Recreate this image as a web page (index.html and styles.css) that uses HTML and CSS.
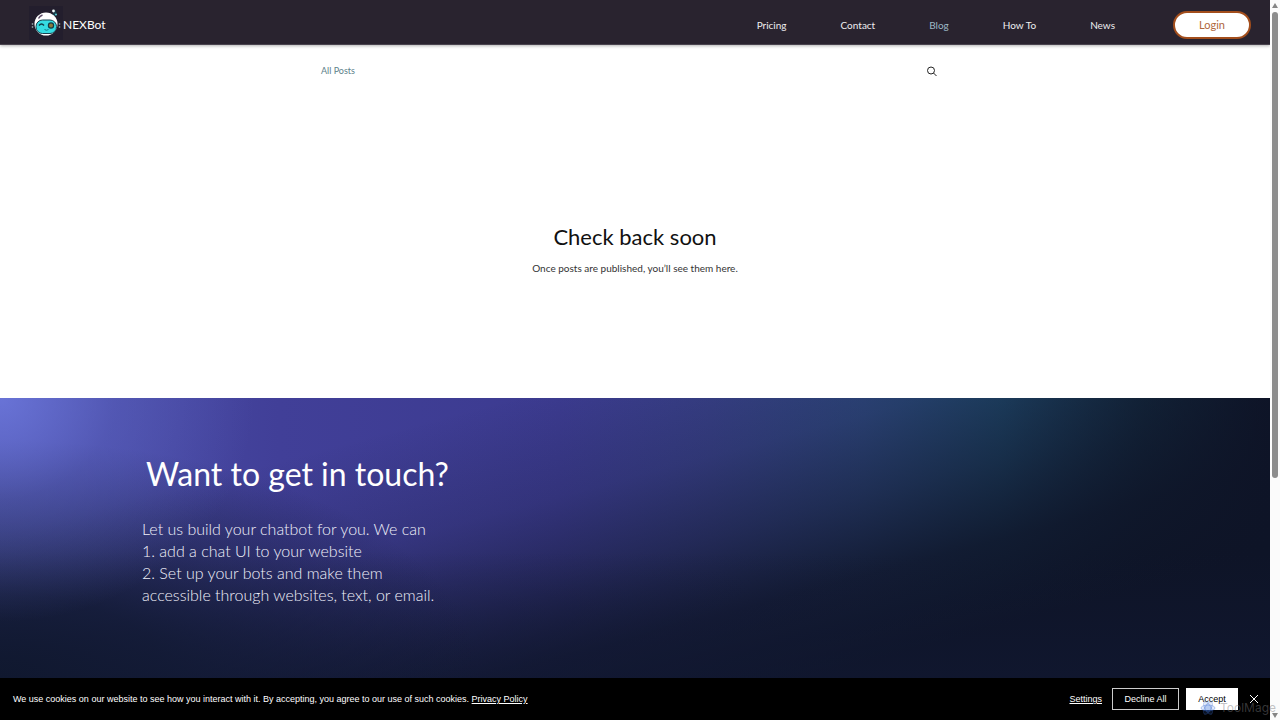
FILE: index.html
```html
<!DOCTYPE html>
<html lang="en">
<head>
<meta charset="utf-8">
<meta name="viewport" content="width=device-width, initial-scale=1">
<title>Blog | NEXBot</title>
<link rel="stylesheet" href="styles.css">
</head>
<body>
<div class="page">
  <header class="header">
    <a class="brand" href="#">
      <svg class="brand-logo" viewBox="0 0 34 34" aria-hidden="true">
        <rect width="34" height="34" fill="#231e2d"/>
        <path d="M23.500 10c2.500-1 3-3 2-5" fill="none" stroke="#173f4c" stroke-width="3"/>
        <circle cx="24.500" cy="5" r="1.400" fill="#f4ffff"/>
        <circle cx="27" cy="8.500" r="1" fill="#5fd4dc"/>
        <circle cx="24" cy="10.500" r="1" fill="#d9f4f8"/>
        <ellipse cx="17" cy="18" rx="11.500" ry="11.500" fill="#fff"/>
        <path d="M9.500 12.500c1-2 2.500-3 4-3.500" fill="none" stroke="#5b4a66" stroke-width="1.500"/>
        <rect x="7" y="14" width="20.500" height="13.500" rx="6.500" fill="#35dce2" stroke="#17414f" stroke-width="1"/>
        <path d="M10 19.500q2.500-3 5 0" fill="none" stroke="#123c48" stroke-width="1.500"/>
        <circle cx="22" cy="19.500" r="2.600" fill="#8a7a3d" stroke="#123c48" stroke-width="1.200"/>
        <path d="M15.500 23.500q2 1.500 4 0" fill="none" stroke="#167886" stroke-width="1"/>
        <path d="M3.500 17.500v1M3.500 20.500v1M30.500 17.500v1M30.500 20.500v1" stroke="#d4f2f4" stroke-width="1.400"/>
      </svg>
      <span class="brand-name">NEXBot</span>
    </a>
    <nav class="nav" aria-label="Main">
      <a href="#">Pricing</a>
      <a href="#">Contact</a>
      <a class="current" href="#" aria-current="page">Blog</a>
      <a href="#">How To</a>
      <a href="#">News</a>
    </nav>
    <button class="login" type="button">Login</button>
  </header>

  <main class="blog">
    <div class="blog-bar">
      <a class="all-posts" href="#">All Posts</a>
      <button class="search" type="button" aria-label="Search">
        <svg viewBox="0 0 12 12" aria-hidden="true"><circle cx="5" cy="5.500" r="3.500"/><path d="M7.500 8l3 3"/></svg>
      </button>
    </div>
    <div class="empty">
      <h1>Check back soon</h1>
      <p>Once posts are published, you’ll see them here.</p>
    </div>
  </main>

  <section class="contact">
    <h2>Want to get in touch?</h2>
    <p>Let us build your chatbot for you. We can<br>1. add a chat UI to your website<br>2. Set up your bots and make them<br>accessible through websites, text, or email.</p>
  </section>

  <div class="cookies" role="region" aria-label="Cookies">
    <p>We use cookies on our website to see how you interact with it. By accepting, you agree to our use of such cookies. <a href="#">Privacy Policy</a></p>
    <button class="settings" type="button">Settings</button>
    <button class="decline" type="button">Decline All</button>
    <button class="accept" type="button">Accept</button>
    <button class="close" type="button" aria-label="Close">
      <svg viewBox="0 0 10 10" aria-hidden="true"><path d="M1 1l8 8M9 1l-8 8"/></svg>
    </button>
  </div>
</div>
<div class="scrollbar" aria-hidden="true">
  <svg class="arrow" viewBox="0 0 10 12"><path d="M5 3l3 5h-6z"/></svg>
  <div class="track"><div class="thumb"></div></div>
  <svg class="arrow" viewBox="0 0 10 12"><path d="M5 10l3-5h-6z"/></svg>
</div>
<div class="watermark" aria-hidden="true">
  <svg viewBox="0 0 16 16"><g><ellipse cx="8" cy="8" rx="7" ry="3"/><ellipse cx="8" cy="8" rx="7" ry="3" transform="rotate(60 8 8)"/><ellipse cx="8" cy="8" rx="7" ry="3" transform="rotate(120 8 8)"/></g></svg>
  <span>ToolMage</span>
</div>
</body>
</html>
```
FILE: styles.css
```css
* { box-sizing: border-box; }
body {
  margin: 0;
  height: 100vh;
  display: flex;
  overflow: hidden;
  background: #fff;
  font-family: Lato, "Liberation Sans", sans-serif;
}
h1, h2, p { margin: 0; font-weight: 400; }
a { color: inherit; text-decoration: none; }
button { font: inherit; cursor: pointer; }
.page { flex: 1; min-width: 0; display: flex; flex-direction: column; }

.header {
  display: flex;
  align-items: center;
  height: 45px;
  padding: 5px 19px 0 29px;
  background: #29232f;
  border-bottom: 1px solid #49434e;
  box-shadow: 0 1px 3px rgba(0, 0, 0, 0.3);
  color: #fff;
}
.brand { display: flex; align-items: center; margin-right: auto; }
.brand-logo { width: 34px; height: 34px; margin-top: -4px; }
.brand-name { font-size: 12px; }
.nav { display: flex; gap: 54px; font-size: 10px; color: #eeeef0; }
.nav .current { color: #9db9c6; }
.login {
  width: 78px;
  height: 28px;
  margin-left: 58px;
  border: 2px solid #a34e1c;
  border-radius: 14px;
  background: #fff;
  color: #b0673c;
  font-size: 11px;
  padding: 0;
}

.blog { flex: 1; }
.blog-bar {
  display: flex;
  justify-content: space-between;
  align-items: center;
  max-width: 628px;
  margin: 0 auto;
  padding: 20px 11px 0 0;
}
.all-posts { font-size: 9px; color: #5c7f8a; line-height: 12px; }
.search { display: flex; padding: 0; border: 0; background: none; }
.search svg { width: 12px; height: 12px; fill: none; stroke: #222; stroke-width: 1; }
.empty { padding-top: 144px; text-align: center; color: #111; }
.empty h1 { font-size: 22px; line-height: 32px; }
.empty p { margin-top: 7px; font-size: 10px; line-height: 16px; color: #333; }

.contact {
  height: 280px;
  padding: 54px 142px 0;
  color: #fff;
  background:
    radial-gradient(ellipse 20% 80% at 0% 0%, rgba(112, 124, 226, 0.8) 0%, rgba(98, 108, 206, 0.4) 45%, rgba(80, 86, 180, 0) 100%),
    radial-gradient(ellipse 38% 85% at 0% 100%, #10182f 0%, rgba(17, 25, 50, 0.85) 35%, rgba(20, 26, 60, 0) 100%),
    linear-gradient(180deg, rgba(17, 24, 50, 0) 55%, rgba(17, 24, 50, 0.65) 100%),
    linear-gradient(165deg, rgba(14, 20, 39, 0) 22%, rgba(14, 20, 39, 0.2) 40%, rgba(14, 20, 39, 0.5) 53%, rgba(14, 20, 39, 0.85) 66%, #0e1427 80%),
    linear-gradient(90deg, #4c50a8 0%, #413f98 22%, #3c3b90 44%, #384088 56%, #2f4880 68%, #20486c 79%, #142a40 90%, #0e1427 100%);
}
.contact h2 { padding-left: 4px; font-size: 32px; line-height: 44px; }
.contact p { margin-top: 22px; font-size: 16px; line-height: 22px; font-weight: 300; color: #f0f0fa; }

.cookies {
  display: flex;
  align-items: center;
  height: 42px;
  padding: 0 11px 0 13px;
  background: #000;
  color: #fff;
  font: 9px "Liberation Sans", Arial, sans-serif;
}
.cookies p { margin-right: auto; }
.cookies a, .settings { text-decoration: underline; }
.cookies button { color: #fff; background: none; border: 0; padding: 0; }
.cookies .decline { width: 67px; height: 22px; margin: 0 7px 0 10px; border: 1px solid #ccc; }
.cookies .accept { width: 52px; height: 22px; background: #fff; color: #000; }
.cookies .close { display: flex; margin-left: 11px; }
.close svg { width: 10px; height: 10px; fill: none; stroke: #fff; stroke-width: 1; }

.scrollbar { width: 10px; display: flex; flex-direction: column; background: #fbfbfb; }
.arrow { width: 10px; height: 12px; fill: #858585; }
.track { flex: 1; padding: 0 2px; }
.thumb { height: 67%; border-radius: 3px; background: #8c8c8c; }

.watermark {
  position: absolute;
  right: 4px;
  bottom: 4px;
  display: flex;
  align-items: center;
  gap: 4px;
  color: rgba(120, 120, 125, 0.45);
  font: 12px/16px Inter, sans-serif;
  pointer-events: none;
}
.watermark svg { width: 16px; height: 16px; fill: rgba(70, 120, 220, 0.15); stroke: rgba(60, 110, 210, 0.35); }
```
